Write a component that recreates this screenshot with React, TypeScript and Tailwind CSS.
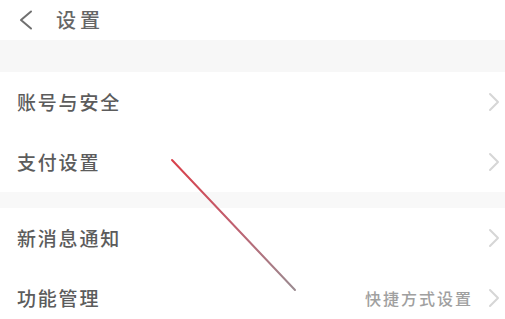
import React from "react";

const Chevron = () => (
  <svg width="12" height="20" viewBox="0 0 12 20" fill="none" className="shrink-0">
    <path d="M2 2 L10 10 L2 18" stroke="#d6d6d6" strokeWidth="2" strokeLinecap="round" strokeLinejoin="round" />
  </svg>
);

const Row = ({ label, extra }: { label: string; extra?: string }) => (
  <div className="flex h-[60px] items-center justify-between bg-white pl-[17px] pr-[5px]">
    <span className="text-[19px] font-medium tracking-[1.8px] text-[#5c5c5c]">{label}</span>
    <div className="flex items-center gap-[15px]">
      {extra && <span className="text-[16px] font-medium tracking-[2px] text-[#a0a0a0]">{extra}</span>}
      <Chevron />
    </div>
  </div>
);

export default function App() {
  return (
    <div
      className="relative h-[319px] w-[505px] overflow-hidden bg-white"
      style={{ fontFamily: '"Noto Sans CJK SC", "Noto Sans", sans-serif' }}
    >
      <div className="flex h-[40px] items-center gap-[22px] pl-[18px]">
        <svg width="16" height="20" viewBox="0 0 16 20" fill="none">
          <path d="M13 1.5 L3 10 L13 18.5" stroke="#707070" strokeWidth="2" strokeLinecap="round" strokeLinejoin="round" />
        </svg>
        <span className="text-[20px] font-medium tracking-[4px] text-[#666]">设置</span>
      </div>
      <div className="h-[32px] bg-[#f7f7f7]" />
      <Row label="账号与安全" />
      <Row label="支付设置" />
      <div className="h-[16px] bg-[#f8f8f8]" />
      <Row label="新消息通知" />
      <Row label="功能管理" extra="快捷方式设置" />
      <svg className="pointer-events-none absolute left-0 top-0" width="505" height="319" viewBox="0 0 505 319">
        <defs>
          <linearGradient id="ln" x1="172" y1="160" x2="295" y2="290" gradientUnits="userSpaceOnUse">
            <stop offset="0" stopColor="#d9404a" />
            <stop offset="0.5" stopColor="#c06070" />
            <stop offset="1" stopColor="#9a8a90" />
          </linearGradient>
        </defs>
        <path d="M172 160 L295 290" stroke="url(#ln)" strokeWidth="2" strokeLinecap="round" />
      </svg>
    </div>
  );
}
